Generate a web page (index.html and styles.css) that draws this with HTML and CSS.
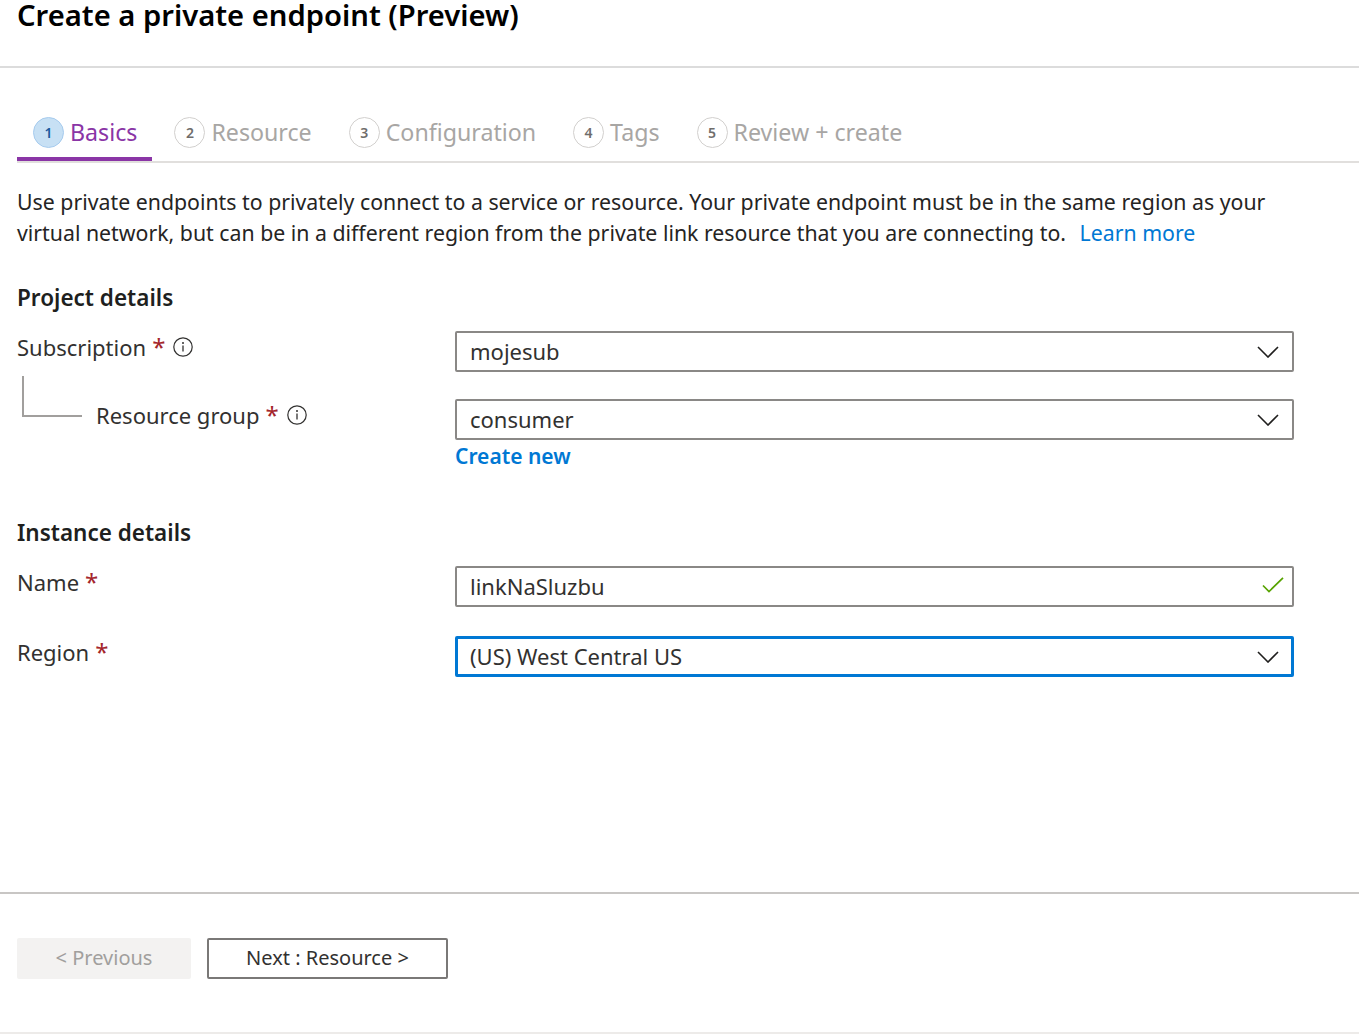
FILE: index.html
```html
<!DOCTYPE html>
<html lang="en">
<head>
<meta charset="utf-8">
<title>Create a private endpoint (Preview)</title>
<link rel="stylesheet" href="styles.css">
</head>
<body>
<header class="page-header">
  <h1 class="title">Create a private endpoint (Preview)</h1>
</header>
<nav class="tabs">
  <div class="tab active"><span class="step">1</span><span class="tab-label">Basics</span></div>
  <div class="tab"><span class="step">2</span><span class="tab-label">Resource</span></div>
  <div class="tab"><span class="step">3</span><span class="tab-label">Configuration</span></div>
  <div class="tab"><span class="step">4</span><span class="tab-label">Tags</span></div>
  <div class="tab"><span class="step">5</span><span class="tab-label">Review + create</span></div>
</nav>
<main class="content">
  <p class="intro">Use private endpoints to privately connect to a service or resource. Your private endpoint must be in the same region as your<br>virtual network, but can be in a different region from the private link resource that you are connecting to. <a class="link learn" href="#">Learn more</a></p>

  <h2 class="section-title">Project details</h2>
  <div class="form-row first">
    <div class="label-cell">
      <span class="label">Subscription</span><span class="req">*</span>
      <svg class="info" width="20" height="20" viewBox="0 0 20 20"><circle cx="10" cy="10" r="9.2" fill="none" stroke="#323130" stroke-width="1.2"/><circle cx="10" cy="5.9" r="1" fill="#323130"/><line x1="10" y1="8.6" x2="10" y2="14.6" stroke="#323130" stroke-width="1.3"/></svg>
    </div>
    <div class="field-cell">
      <div class="select"><span class="value">mojesub</span><svg class="chev" width="22" height="12" viewBox="0 0 22 12"><polyline points="1,1 11,11 21,1" fill="none" stroke="#201f1e" stroke-width="1.6"/></svg></div>
    </div>
  </div>
  <div class="form-row second">
    <div class="label-cell nested">
      <span class="label">Resource group</span><span class="req">*</span>
      <svg class="info" width="20" height="20" viewBox="0 0 20 20"><circle cx="10" cy="10" r="9.2" fill="none" stroke="#323130" stroke-width="1.2"/><circle cx="10" cy="5.9" r="1" fill="#323130"/><line x1="10" y1="8.6" x2="10" y2="14.6" stroke="#323130" stroke-width="1.3"/></svg>
    </div>
    <div class="field-cell">
      <div class="select"><span class="value">consumer</span><svg class="chev" width="22" height="12" viewBox="0 0 22 12"><polyline points="1,1 11,11 21,1" fill="none" stroke="#201f1e" stroke-width="1.6"/></svg></div>
      <a class="link create" href="#">Create new</a>
    </div>
  </div>

  <h2 class="section-title instance">Instance details</h2>
  <div class="form-row first">
    <div class="label-cell"><span class="label">Name</span><span class="req">*</span></div>
    <div class="field-cell">
      <div class="select"><span class="value">linkNaSluzbu</span><svg class="check" width="22" height="16" viewBox="0 0 22 16"><polyline points="1,8.5 7,14.5 21,0.8" fill="none" stroke="#57a300" stroke-width="1.7"/></svg></div>
    </div>
  </div>
  <div class="form-row third">
    <div class="label-cell"><span class="label">Region</span><span class="req">*</span></div>
    <div class="field-cell">
      <div class="select focused"><span class="value">(US) West Central US</span><svg class="chev" width="22" height="12" viewBox="0 0 22 12"><polyline points="1,1 11,11 21,1" fill="none" stroke="#201f1e" stroke-width="1.6"/></svg></div>
    </div>
  </div>
</main>
<footer class="page-footer">
  <button class="btn btn-prev" type="button">&lt; Previous</button>
  <button class="btn btn-next" type="button">Next : Resource &gt;</button>
</footer>
</body>
</html>
```

FILE: styles.css
```css
* { box-sizing: border-box; }

html, body { height: 100%; }

body {
  margin: 0;
  font-family: "Noto Sans", "Open Sans", sans-serif;
  color: #323130;
  background: #ffffff;
  display: flex;
  flex-direction: column;
  min-height: 100vh;
}

.page-header {
  height: 68px;
  border-bottom: 2px solid #dcdcdc;
  padding: 0 17px;
}

.title {
  margin: 0;
  font-size: 29.2px;
  line-height: 30px;
  font-weight: 600;
  color: #000000;
}

.tabs {
  display: flex;
  gap: 6px;
  margin: 49px 0 0 17px;
  border-bottom: 2px solid #e1dfdd;
}

.tab {
  display: flex;
  align-items: center;
  gap: 6px;
  padding: 0 15px 9px 16px;
  border-bottom: 4px solid transparent;
}

.tab.active { border-bottom-color: #8a35a6; }

.step {
  width: 31px;
  height: 31px;
  border-radius: 50%;
  border: 1.5px solid #d2d0ce;
  display: flex;
  align-items: center;
  justify-content: center;
  font-size: 14px;
  font-weight: 600;
  color: #6f6d6b;
}

.tab.active .step {
  background: #c7e0f4;
  border-color: #a6cbee;
  color: #1a5a9e;
}

.tab-label {
  font-size: 23.2px;
  line-height: 31px;
  color: #a8a6a4;
}

.tab.active .tab-label { color: #8a35a6; }

.content {
  flex: 1;
  padding: 0 17px;
}

.intro {
  margin: 23px 0 0;
  font-size: 21.3px;
  line-height: 31px;
  color: #252423;
  white-space: nowrap;
}

.link {
  color: #0078d4;
  text-decoration: none;
}

.learn { margin-left: 8px; }

.section-title {
  margin: 35px 0 0;
  font-size: 22.5px;
  line-height: 30px;
  font-weight: 600;
  color: #201f1e;
}

.section-title.instance { margin-top: 47px; }

.form-row {
  display: grid;
  grid-template-columns: 438px 839px;
}

.form-row.first { margin-top: 18px; }
.form-row.second { margin-top: 27px; }
.form-row.third { margin-top: 29px; }

.label-cell {
  position: relative;
  display: flex;
  align-items: flex-start;
  padding-top: 1px;
  font-size: 22px;
  line-height: 30px;
}

.label-cell.nested { padding-left: 79px; }

.label-cell.nested::before {
  content: "";
  position: absolute;
  left: 5px;
  top: -23px;
  width: 58px;
  height: 39px;
  border-left: 2px solid #a19f9d;
  border-bottom: 2px solid #a19f9d;
}

.label { color: #323130; }

.req {
  color: #a4262c;
  margin-left: 6px;
  font-size: 24px;
  line-height: 30px;
}

.info {
  margin: 5px 0 0 8px;
  flex: none;
}

.select {
  height: 41px;
  border: 2px solid #8a8886;
  border-radius: 2px;
  display: flex;
  align-items: center;
  justify-content: space-between;
  padding: 0 13px 2px 13px;
  font-size: 22px;
  color: #323130;
}

.select.focused {
  border: 3px solid #0078d4;
  padding: 0 12px 2px 12px;
}

.value { line-height: 30px; }

.chev { margin-top: 2px; }

.check { margin-right: -5px; margin-top: -1px; }

.create {
  display: block;
  margin-top: 1px;
  font-size: 21px;
  line-height: 30px;
  font-weight: 600;
}

.page-footer {
  display: flex;
  gap: 16px;
  padding: 44px 17px 53px;
  border-top: 2px solid #c8c6c4;
  border-bottom: 2px solid #edebe9;
}

.btn {
  height: 41px;
  border-radius: 2px;
  font-family: "Noto Sans", "Open Sans", sans-serif;
  font-size: 20px;
  display: flex;
  align-items: center;
  justify-content: center;
  padding: 0 0 2px;
}

.btn-prev {
  width: 174px;
  background: #f3f2f1;
  border: none;
  color: #a19f9d;
}

.btn-next {
  width: 241px;
  background: #ffffff;
  border: 2px solid #7a7877;
  color: #323130;
}
```
